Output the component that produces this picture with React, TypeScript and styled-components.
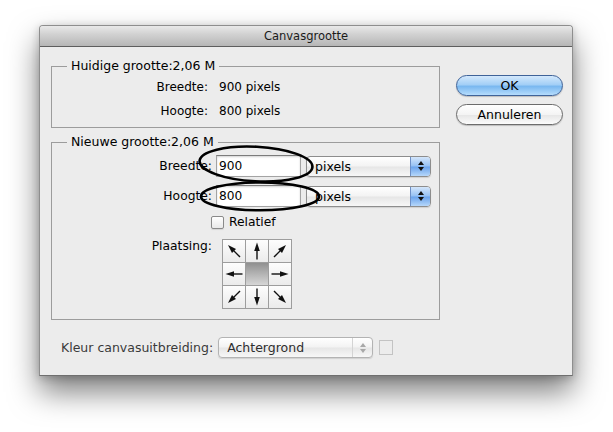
import styled, { createGlobalStyle } from 'styled-components';

const GlobalStyle = createGlobalStyle`
    html, body {
        margin: 0;
        padding: 0;
        background: #ffffff;
    }
    body {
        width: 613px;
        height: 432px;
        overflow: hidden;
        font-family: "DejaVu Sans", "Liberation Sans", sans-serif;
        color: #000;
    }
`;

const Window = styled.div`
    position: relative;
    box-sizing: border-box;
    margin: 25px 0 0 39px;
    width: 534px;
    height: 351px;
    background: #ececec;
    border: 1px solid #8e8e8e;
    border-bottom-color: #6f6f6f;
    border-radius: 4px 4px 0 0;
    box-shadow: 0 16px 30px rgba(0, 0, 0, 0.5), 0 2px 8px rgba(0, 0, 0, 0.2);
    display: flex;
    flex-direction: column;
`;

const TitleBar = styled.div`
    height: 20px;
    border-bottom: 1px solid #5e5e5e;
    border-radius: 3px 3px 0 0;
    background: linear-gradient(#e9e9e9, #d2d2d2 40%, #b6b6b6);
    display: flex;
    align-items: center;
    justify-content: center;
    font-size: 11.5px;
    color: #1a1a1a;
`;

const Body = styled.div`
    display: flex;
    gap: 16px;
    padding: 12px 9px 0 11px;
`;

const LeftColumn = styled.div`
    width: 389px;
    display: flex;
    flex-direction: column;
`;

const RightColumn = styled.div`
    width: 107px;
    margin-top: 16px;
    display: flex;
    flex-direction: column;
    gap: 8px;
`;

const Group = styled.fieldset<{ $gap?: number }>`
    margin: ${p => p.$gap ?? 0}px 0 0 0;
    padding: 0;
    min-inline-size: 0;
    border: 1px solid #9c9c9c;
`;

const Legend = styled.legend`
    margin-left: 15px;
    padding: 0 4px;
    font-size: 12.5px;
    line-height: 14px;
`;

const InfoGrid = styled.div`
    display: grid;
    grid-template-columns: 156px auto;
    grid-auto-rows: 24px;
    column-gap: 11px;
    align-items: center;
    padding: 2px 0 4px;
    font-size: 12px;
`;

const FormGrid = styled.div`
    display: grid;
    grid-template-columns: 160px auto;
    column-gap: 4px;
    row-gap: 8px;
    align-items: center;
    padding: 6px 0 10px;
    font-size: 12.3px;
`;

const Label = styled.span<{ $top?: boolean }>`
    text-align: right;
    align-self: ${p => (p.$top ? 'start' : 'center')};
    margin-top: ${p => (p.$top ? '2px' : '0')};
`;

const FieldRow = styled.div`
    display: flex;
    align-items: center;
    gap: 5px;
`;

const TextInput = styled.div`
    box-sizing: border-box;
    width: 85px;
    height: 22px;
    background: #fff;
    border: 1px solid #a3a3a3;
    border-top-color: #7c7c7c;
    box-shadow: inset 0 1px 2px rgba(0, 0, 0, 0.18);
    padding-left: 2px;
    display: flex;
    align-items: center;
    font-size: 12.2px;
`;

const Select = styled.div<{ $width: number; $disabled?: boolean }>`
    box-sizing: border-box;
    width: ${p => p.$width}px;
    height: 21px;
    border: 1px solid ${p => (p.$disabled ? '#b3b3b3' : '#8d8d8d')};
    border-radius: 4px;
    background: linear-gradient(#ffffff, #f3f3f3 48%, #e6e6e6 52%, #f7f7f7);
    box-shadow: 0 1px 1px rgba(0, 0, 0, 0.12);
    display: flex;
    align-items: center;
    overflow: hidden;
    font-size: 12.5px;
    color: ${p => (p.$disabled ? '#2e2e2e' : '#000')};
`;

const SelectText = styled.span`
    flex: 1;
    padding-left: 8px;
`;

const Stepper = styled.div<{ $disabled?: boolean }>`
    width: 19px;
    align-self: stretch;
    display: flex;
    flex-direction: column;
    align-items: center;
    justify-content: center;
    gap: 2px;
    border-left: 1px solid ${p => (p.$disabled ? '#d4d4d4' : '#6d8fc6')};
    background: ${p =>
        p.$disabled
            ? 'transparent'
            : 'linear-gradient(#d4e6fb, #94c0f3 48%, #6aa3ec 52%, #b6d7fa)'};
`;

const Tri = styled.span<{ $down?: boolean; $disabled?: boolean }>`
    width: 0;
    height: 0;
    border-left: 3px solid transparent;
    border-right: 3px solid transparent;
    ${p => (p.$down ? 'border-top' : 'border-bottom')}: 4px solid ${p => (p.$disabled ? '#a8a8a8' : '#111')};
`;

const CheckRow = styled.label`
    grid-column: 2;
    margin-left: -5px;
    display: flex;
    align-items: center;
    gap: 5px;
    height: 14px;
`;

const CheckBox = styled.span`
    box-sizing: border-box;
    width: 13px;
    height: 13px;
    border: 1px solid #8a8a8a;
    border-radius: 2px;
    background: linear-gradient(#ffffff, #e9e9e9);
    box-shadow: 0 1px 1px rgba(0, 0, 0, 0.1);
`;

const AnchorGrid = styled.div`
    margin: 2px 0 0 6px;
    width: 70px;
    display: grid;
    grid-template-columns: repeat(3, 22px);
    grid-template-rows: repeat(3, 22px);
    gap: 1px;
    padding: 1px;
    box-sizing: border-box;
    background: #9d9d9d;
`;

const AnchorCell = styled.div<{ $center?: boolean }>`
    background: ${p =>
        p.$center
            ? 'linear-gradient(#909090, #b4b4b4 50%, #d6d6d6)'
            : 'linear-gradient(#fdfdfd, #ebebeb)'};
`;

const BottomRow = styled.div`
    margin-top: 17px;
    padding-left: 10px;
    display: flex;
    align-items: center;
    gap: 5px;
    font-size: 12.5px;
    color: #3a3a3a;
`;

const Swatch = styled.span`
    margin-left: 1px;
    box-sizing: border-box;
    width: 14px;
    height: 15px;
    border: 1px solid #c3c3c3;
    background: #ececec;
`;

const PillButton = styled.div<{ $primary?: boolean }>`
    box-sizing: border-box;
    height: 21px;
    border-radius: 11px;
    border: 1px solid ${p => (p.$primary ? '#3f6399' : '#6c6c6c')};
    background: ${p =>
        p.$primary
            ? 'linear-gradient(#d3e8fc, #a3cff6 45%, #7ab8f0 55%, #b5dcfc)'
            : 'linear-gradient(#ffffff, #f4f4f4 50%, #e7e7e7 55%, #fbfbfb)'};
    box-shadow: 0 1px 1px rgba(0, 0, 0, 0.2);
    display: flex;
    align-items: center;
    justify-content: center;
    font-size: 12.5px;
`;

const Annotation = styled.svg`
    position: absolute;
    left: 150px;
    top: 112px;
    pointer-events: none;
`;

const Arrow = ({ angle }: { angle: number }) => (
    <svg width="22" height="22" viewBox="0 0 22 22">
        <g transform={`rotate(${angle} 11 11)`}>
            <line x1="11" y1="19.5" x2="11" y2="8" stroke="#111" strokeWidth="1.4" />
            <polygon points="11,2.5 8.2,11 13.8,11" fill="#111" />
        </g>
    </svg>
);

const anchors: (number | null)[] = [-45, 0, 45, -90, null, 90, -135, 180, 135];

const PopupSelect = ({ text, width, disabled }: { text: string; width: number; disabled?: boolean }) => (
    <Select $width={width} $disabled={disabled}>
        <SelectText>{text}</SelectText>
        <Stepper $disabled={disabled}>
            <Tri $disabled={disabled} />
            <Tri $down $disabled={disabled} />
        </Stepper>
    </Select>
);

export default function App() {
    return (
        <>
            <GlobalStyle />
            <Window>
                <TitleBar>Canvasgrootte</TitleBar>
                <Body>
                    <LeftColumn>
                        <Group>
                            <Legend>Huidige grootte:2,06 M</Legend>
                            <InfoGrid>
                                <Label>Breedte:</Label>
                                <span>900 pixels</span>
                                <Label>Hoogte:</Label>
                                <span>800 pixels</span>
                            </InfoGrid>
                        </Group>

                        <Group $gap={7}>
                            <Legend>Nieuwe grootte:2,06 M</Legend>
                            <FormGrid>
                                <Label>Breedte:</Label>
                                <FieldRow>
                                    <TextInput>900</TextInput>
                                    <PopupSelect text="pixels" width={125} />
                                </FieldRow>
                                <Label>Hoogte:</Label>
                                <FieldRow>
                                    <TextInput>800</TextInput>
                                    <PopupSelect text="pixels" width={125} />
                                </FieldRow>
                                <CheckRow>
                                    <CheckBox />
                                    Relatief
                                </CheckRow>
                                <Label $top>Plaatsing:</Label>
                                <AnchorGrid>
                                    {anchors.map((a, i) => (
                                        <AnchorCell key={i} $center={a === null}>
                                            {a !== null && <Arrow angle={a} />}
                                        </AnchorCell>
                                    ))}
                                </AnchorGrid>
                            </FormGrid>
                        </Group>

                        <BottomRow>
                            Kleur canvasuitbreiding:
                            <PopupSelect text="Achtergrond" width={155} disabled />
                            <Swatch />
                        </BottomRow>
                    </LeftColumn>

                    <RightColumn>
                        <PillButton $primary>OK</PillButton>
                        <PillButton>Annuleren</PillButton>
                    </RightColumn>
                </Body>

                {/* hand-drawn marks around the input fields */}
                <Annotation width="140" height="80" viewBox="0 0 140 80">
                    <ellipse cx="66" cy="26" rx="56.5" ry="17.3" fill="none" stroke="#000" strokeWidth="2.6" transform="rotate(3 66 26)" />
                    <ellipse cx="70" cy="58.4" rx="59" ry="13.9" fill="none" stroke="#000" strokeWidth="2.6" />
                </Annotation>
            </Window>
        </>
    );
}
